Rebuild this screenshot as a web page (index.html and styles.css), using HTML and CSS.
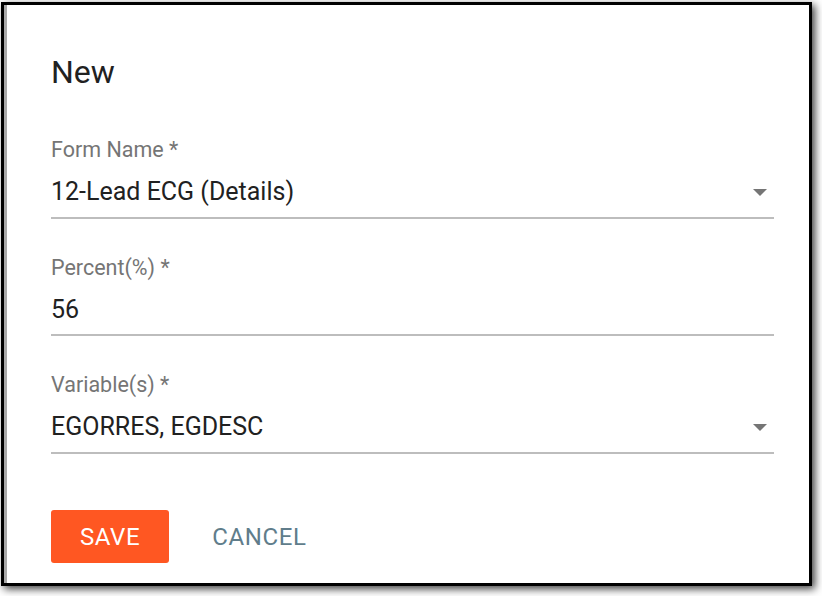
FILE: index.html
```html
<!DOCTYPE html>
<html>
<head>
<meta charset="utf-8">
<link rel="stylesheet" href="styles.css">
</head>
<body>
<div class="dialog">
  <h2 class="title">New</h2>
  <div class="field">
    <div class="label">Form Name *</div>
    <div class="row">
      <span class="value">12-Lead ECG (Details)</span>
      <span class="arrow"></span>
    </div>
  </div>
  <div class="field">
    <div class="label">Percent(%) *</div>
    <div class="row">
      <span class="value">56</span>
    </div>
  </div>
  <div class="field">
    <div class="label">Variable(s) *</div>
    <div class="row">
      <span class="value">EGORRES, EGDESC</span>
      <span class="arrow"></span>
    </div>
  </div>
  <div class="actions">
    <button class="btn btn-save">SAVE</button>
    <button class="btn btn-cancel">CANCEL</button>
  </div>
</div>
</body>
</html>
```
FILE: styles.css
```css
html, body {
  margin: 0;
  padding: 0;
  background: #ffffff;
}
body {
  width: 822px;
  height: 596px;
  overflow: hidden;
  font-family: Roboto, "Liberation Sans", sans-serif;
}
.dialog {
  box-sizing: border-box;
  margin: 2px 0 0 1px;
  width: 811px;
  border: 3px solid #000;
  background: #fff;
  box-shadow: inset 3px 0 0 #a9a9a9, 3px 3px 8px rgba(0, 0, 0, 0.75);
  padding: 48px 35px 20px 47px;
}
.title {
  margin: 0;
  font-size: 32px;
  line-height: 38px;
  font-weight: 400;
  color: #212121;
}
.field {
  margin-top: 37px;
}
.title + .field {
  margin-top: 47px;
}
.label {
  font-size: 21.5px;
  line-height: 24px;
  color: #757575;
}
.row {
  display: flex;
  align-items: center;
  justify-content: space-between;
  margin-top: 15px;
  height: 30px;
  padding-bottom: 9.5px;
  border-bottom: 2px solid #bdbdbd;
}
.value {
  font-size: 25px;
  line-height: 30px;
  color: #212121;
}
.arrow {
  width: 0;
  height: 0;
  border-left: 7px solid transparent;
  border-right: 7px solid transparent;
  border-top: 7px solid #757575;
  margin-right: 7px;
}
.actions {
  display: flex;
  gap: 14px;
  margin-top: 56.5px;
}
.btn {
  font-family: Roboto, "Liberation Sans", sans-serif;
  font-size: 24px;
  font-weight: 400;
  letter-spacing: 0.6px;
  height: 53px;
  padding: 0 29px;
  border: none;
  border-radius: 3px;
  background: transparent;
  cursor: pointer;
}
.btn-save {
  background: #ff5722;
  color: #fff;
}
.btn-cancel {
  color: #607d8b;
}
```
